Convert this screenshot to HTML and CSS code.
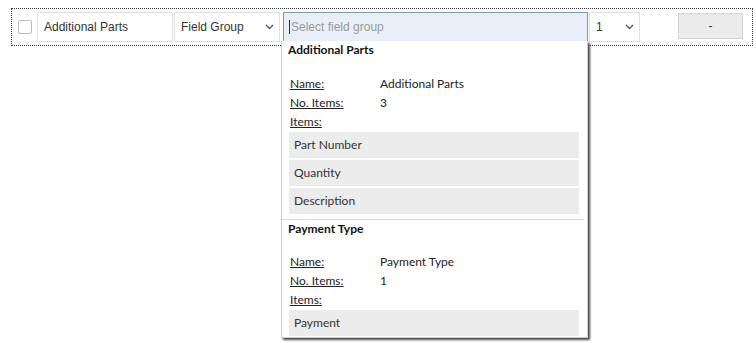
FILE: index.html
```html
<!DOCTYPE html>
<html lang="en">

<head>
  <meta charset="UTF-8">
  <title>Field groups</title>
  <link rel="stylesheet" href="styles.css">
</head>

<body>
  <div class="row">
    <div class="cell-check"><span class="checkbox"></span></div>
    <div class="field name-field">Additional Parts</div>
    <div class="field select type-field">Field Group
      <svg class="chevron" width="9" height="6" viewBox="0 0 9 6"><path d="M1 1l3.5 3.5L8 1" fill="none" stroke="#555" stroke-width="1.3"/></svg>
    </div>
    <div class="field group-field"><span class="caret"></span><span class="placeholder">Select field group</span></div>
    <div class="field select count-field">1
      <svg class="chevron" width="9" height="6" viewBox="0 0 9 6"><path d="M1 1l3.5 3.5L8 1" fill="none" stroke="#555" stroke-width="1.3"/></svg>
    </div>
    <div class="spacer"></div>
    <button class="remove">-</button>

    <div class="dropdown">
      <div class="group">
        <div class="group-title">Additional Parts</div>
        <div class="details">
          <div class="detail"><span class="label">Name:</span><span>Additional Parts</span></div>
          <div class="detail"><span class="label">No. Items:</span><span>3</span></div>
          <div class="detail"><span class="label">Items:</span></div>
        </div>
        <div class="items">
          <div class="item">Part Number</div>
          <div class="item">Quantity</div>
          <div class="item">Description</div>
        </div>
      </div>
      <div class="group">
        <div class="group-title">Payment Type</div>
        <div class="details">
          <div class="detail"><span class="label">Name:</span><span>Payment Type</span></div>
          <div class="detail"><span class="label">No. Items:</span><span>1</span></div>
          <div class="detail"><span class="label">Items:</span></div>
        </div>
        <div class="items">
          <div class="item">Payment</div>
        </div>
      </div>
    </div>
  </div>
</body>

</html>
```

FILE: styles.css
```css
html,
body {
  min-height: 100%;
}

body {
  box-sizing: border-box;
  min-height: 343px;
  margin: 0;
  padding: 8px 3px 0 11px;
  font-family: "Liberation Sans", Arial, sans-serif;
  font-size: 12px;
  color: #333;
  background-color: #fff;
}

.row {
  position: relative;
  display: flex;
  align-items: center;
  gap: 1px;
  height: 30px;
  padding: 3px 9px 3px 0;
  border: 1px dotted #334;
}

.cell-check {
  width: 24px;
  display: flex;
  justify-content: center;
}

.checkbox {
  width: 12px;
  height: 12px;
  border: 1px solid #bbb;
  border-radius: 2px;
  margin-left: 1px;
}

.field {
  box-sizing: border-box;
  height: 30px;
  display: flex;
  align-items: center;
  padding: 0 6px;
  border: 1px solid #e2e2e2;
  background-color: #fff;
}

.name-field {
  width: 136px;
}

.select {
  justify-content: space-between;
  padding-right: 5px;
}

.type-field {
  width: 106px;
}

.group-field {
  width: 305px;
  margin-left: 2px;
  background-color: #e8eff9;
  border-color: #7f9db2;
  padding-left: 5px;
}

.caret {
  width: 1px;
  height: 14px;
  background-color: #333;
  margin-right: 1px;
}

.placeholder {
  color: #9a9a9a;
}

.count-field {
  width: 51px;
}

.spacer {
  flex: 1;
}

.remove {
  width: 65px;
  height: 26px;
  margin-top: -3px;
  border: 1px solid #d3d3d3;
  background-color: #ececec;
  font-family: "Liberation Sans", Arial, sans-serif;
  font-size: 12px;
  color: #333;
}

.dropdown {
  position: absolute;
  z-index: 2;
  top: 32px;
  left: 269px;
  width: 305px;
  background-color: #fff;
  border: 1px solid #d0d0d0;
  border-top: none;
  box-shadow: 2px 2px 2px #4a4a4a;
  font-family: Lato, "Liberation Sans", sans-serif;
  font-size: 12px;
  color: #222;
}

.group {
  padding: 1px 5px 5px 6px;
  border-bottom: 1px solid #d8d8d8;
  margin-right: 3px;
}

.group:last-child {
  border-bottom: none;
  padding-bottom: 1px;
}

.group-title {
  font-weight: bold;
  line-height: 16px;
  color: #111;
}

.details {
  margin-top: 16px;
  margin-bottom: 1px;
  padding-left: 2px;
}

.group:last-child .details {
  margin-top: 15px;
}

.detail {
  display: flex;
  line-height: 19px;
}

.label {
  width: 90px;
  text-decoration: underline;
}

.items {
  display: flex;
  flex-direction: column;
  gap: 2px;
  margin-left: 1px;
}

.item {
  height: 26px;
  line-height: 26px;
  padding-left: 5px;
  background-color: #ececec;
  color: #333;
}
```
